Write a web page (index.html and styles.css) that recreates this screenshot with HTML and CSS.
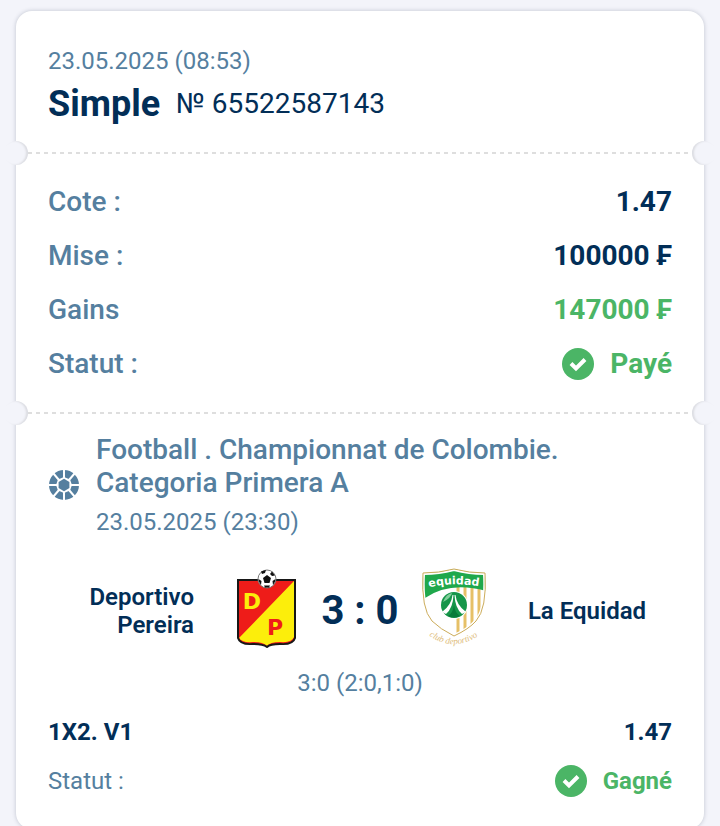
FILE: index.html
```html
<!DOCTYPE html>
<html lang="fr">
<head>
<meta charset="utf-8">
<meta name="viewport" content="width=device-width, initial-scale=1">
<title>Simple № 65522587143</title>
<link rel="stylesheet" href="styles.css">
</head>
<body>
<main class="ticket">
  <header class="section head">
    <time class="date" datetime="2025-05-23T08:53">23.05.2025 (08:53)</time>
    <div class="title-row">
      <h1 class="title">Simple</h1>
      <span class="number">№ 65522587143</span>
    </div>
  </header>

  <dl class="section summary">
    <div class="row"><dt>Cote :</dt><dd>1.47</dd></div>
    <div class="row"><dt>Mise :</dt><dd>100000 ₣</dd></div>
    <div class="row"><dt>Gains</dt><dd class="win">147000 ₣</dd></div>
    <div class="row">
      <dt>Statut :</dt>
      <dd class="win status">
        <svg class="check" viewBox="0 0 32 32" aria-hidden="true"><circle cx="16" cy="16" r="16" fill="#4bb566"/><path d="M9 15.500l5 5 9-9" fill="none" stroke="#fff" stroke-width="4"/></svg>
        Payé
      </dd>
    </div>
  </dl>

  <section class="section event">
    <div class="league">
      <svg class="ball" viewBox="0 0 32 32" aria-hidden="true">
        <circle cx="16" cy="16" r="15" fill="#557f9f"/>
        <path d="M16 8l6 2.500 2 5.500-2 5.500-6 2.500-6-2.500L8 16l2-5.500z" fill="#fff"/>
        <g stroke="#fff" stroke-width="2">
          <path d="M16 0v9M16 23v9M0 16h9M23 16h9M5 4l6 7M27 4l-6 7M5 28l6-7M27 28l-6-7"/>
        </g>
        <path d="M16 9.800l5.400 3.100v6.200L16 22.200l-5.400-3.100v-6.200z" fill="#557f9f"/>
      </svg>
      <div class="league-text">
        <h2 class="league-name">Football . Championnat de Colombie. Categoria Primera A</h2>
        <time class="date" datetime="2025-05-23T23:30">23.05.2025 (23:30)</time>
      </div>
    </div>

    <div class="match">
      <span class="team home">Deportivo Pereira</span>
      <svg class="crest" viewBox="0 0 64 80" role="img" aria-label="Deportivo Pereira">
        <path d="M4 12h57v58q-2 7-15 6-10 0-13 3-4-3-14-3-13 1-15-6z" fill="#ee1c19"/>
        <path d="M60 13L5 70q3 5 14 4 10 0 14 4 3-4 13-4 12 1 14-5z" fill="#fcee0b"/>
        <path d="M4 12h57v58q-2 7-15 6-10 0-13 3-4-3-14-3-13 1-15-6z" fill="none" stroke="#171717" stroke-width="2"/>
        <circle cx="33" cy="11" r="9" fill="#fff" stroke="#777"/>
        <path d="M33 7l4 3-1.500 5h-5L29 10zM27 3.500l5-1.500-1 3-3 1zM38 3.500l3 4-3 .5-2-2zM24.500 11l3 2-.5 4q-2.500-3-2.500-6zM41.500 11l-3 2 .5 4q2.500-3 2.500-6zM30 17.500h6l-1 2h-4z" fill="#111"/>
        <text x="18" y="41" class="crest-letter letter-d">D</text>
        <text x="41" y="67" class="crest-letter letter-p">P</text>
      </svg>
      <strong class="score">3 : 0</strong>
      <svg class="crest" viewBox="0 0 64 80" role="img" aria-label="La Equidad">
        <defs>
          <clipPath id="shield"><path d="M1 5q16 0 31-4 15 4 31 4 2 36-9 48-7 8-22 15-14-7-22-15Q-1 41 1 5z"/></clipPath>
          <path id="arc-top" d="M4 20q28-7 56-1"/>
          <path id="arc-bottom" d="M5 66q26 20 53 1"/>
        </defs>
        <g clip-path="url(#shield)">
          <path fill="#fff" d="M0 0h64v80H0z"/>
          <path d="M36 18v54M43 18v54M50 18v54M57 18v54" stroke="#e6c067" stroke-width="3"/>
          <path d="M0 3l32-4 32 4v20Q28 13 3 30H0z" fill="#1fa84c"/>
        </g>
        <path d="M2 6q15 0 30-4 15 4 30 4 2 35-9 47-7 8-21 14-14-6-21-14Q0 41 2 6z" fill="none" stroke="#fff" stroke-width="2"/>
        <path d="M1 5q16 0 31-4 15 4 31 4 2 36-9 48-7 8-22 15-14-7-22-15Q-1 41 1 5z" fill="none" stroke="#ccac5b"/>
        <circle cx="32" cy="37" r="14" fill="#fff"/>
        <circle cx="32" cy="37" r="13" fill="#16964a"/>
        <path d="M21 34q3-8 9-9-1 5-9 9z" fill="#82cf9b"/>
        <path d="M30.500 27q-1 10-10.500 17l4 2q7-6 7.500-19zM33.500 27q1 10 10.500 17l-4 2q-7-6-7.500-19z" fill="#fff"/>
        <path d="M32 37q1 8 6 11-6 3-12 0 5-3 6-11z" fill="#087b39"/>
        <text class="club-name"><textPath href="#arc-top" startOffset="50%">equidad</textPath></text>
        <text class="club-sub"><textPath href="#arc-bottom" startOffset="50%">club deportivo</textPath></text>
      </svg>
      <span class="team away">La Equidad</span>
    </div>
    <p class="periods">3:0 (2:0,1:0)</p>

    <div class="bet"><strong>1X2. V1</strong><strong>1.47</strong></div>
    <div class="bet result">
      <span class="bet-label">Statut :</span>
      <strong class="win status">
        <svg class="check" viewBox="0 0 32 32" aria-hidden="true"><circle cx="16" cy="16" r="16" fill="#4bb566"/><path d="M9 15.500l5 5 9-9" fill="none" stroke="#fff" stroke-width="4"/></svg>
        Gagné
      </strong>
    </div>
  </section>
</main>
</body>
</html>
```
FILE: styles.css
```css
* { box-sizing: border-box; }

body {
  margin: 0;
  padding: 11px 16px 0;
  background: #f3f4fa;
  color: #022e57;
  font-family: Roboto, "Liberation Sans", sans-serif;
  font-size: 24px;
  line-height: 28px;
}

h1, h2, p, dl, dd { margin: 0; }

.ticket {
  background: #fff;
  border-radius: 16px;
  box-shadow: 0 0 4px rgba(40, 50, 80, 0.25);
}

.section {
  position: relative;
  padding: 0 32px;
}

.section + .section::before,
.section + .section::after {
  content: "";
  position: absolute;
  top: -11px;
  width: 24px;
  height: 24px;
  border-radius: 50%;
  background: #f3f4fa;
}

.section + .section::before {
  left: -12px;
  box-shadow: inset -2px 0 2px #dcdde2;
}

.section + .section::after {
  right: -12px;
  box-shadow: inset 2px 0 2px #dcdde2;
}

.section + .section {
  background: repeating-linear-gradient(90deg, #dedede 0 4px, transparent 4px 8px) 12px 0 / calc(100% - 24px) 2px no-repeat;
}

.head { padding-top: 36px; padding-bottom: 24px; }

.date, .periods, .bet-label { color: #557f9f; }

.date { display: block; }

.title-row {
  display: flex;
  align-items: center;
  gap: 16px;
  margin-top: 5px;
}

.title {
  font-size: 36px;
  line-height: 48px;
  font-weight: 700;
}

.number { font-size: 28px; }

.summary {
  padding-top: 23px;
  padding-bottom: 21px;
}

.row {
  display: flex;
  align-items: center;
  justify-content: space-between;
  height: 54px;
  font-size: 28px;
}

.row dt { color: #557f9f; font-weight: 500; }
.row dd { font-weight: 700; }
.row .win, .bet .win { color: #4bb566; }

.status {
  display: flex;
  align-items: center;
  gap: 16px;
}

.check { width: 32px; height: 32px; }

.event { padding-top: 21px; padding-bottom: 24px; }

.league {
  display: flex;
  align-items: center;
  gap: 16px;
}

.ball { flex: none; width: 32px; height: 32px; }

.league-name {
  max-width: 500px;
  margin-bottom: 9px;
  color: #557f9f;
  font-size: 28px;
  line-height: 33px;
  font-weight: 500;
}

.match {
  display: grid;
  grid-template-columns: 1fr 64px 80px 64px 1fr;
  align-items: center;
  column-gap: 22px;
  margin-top: 32px;
}

.team { padding-top: 6px; font-weight: 600; }
.home { padding-right: 18px; text-align: right; }
.away { padding-right: 6px; text-align: center; }
.crest { width: 64px; height: 80px; }

.score {
  padding-top: 6px;
  font-size: 40px;
  line-height: 48px;
  text-align: center;
  white-space: nowrap;
}

.crest-letter {
  font-family: "DejaVu Sans", sans-serif;
  font-size: 22px;
  font-weight: 700;
  text-anchor: middle;
}

.letter-d { fill: #fcee0b; }
.letter-p { fill: #ee1c19; }

.club-name {
  fill: #fff;
  font-family: "DejaVu Sans", sans-serif;
  font-size: 11px;
  font-weight: 700;
  text-anchor: middle;
}

.club-sub {
  fill: #e0bd7c;
  font-family: "Liberation Serif", serif;
  font-size: 9px;
  font-style: italic;
  text-anchor: middle;
}

.periods { margin-top: 21px; text-align: center; }

.bet {
  display: flex;
  align-items: center;
  justify-content: space-between;
  height: 49px;
  margin-top: 10px;
}

.result { margin-top: 0; }
```
